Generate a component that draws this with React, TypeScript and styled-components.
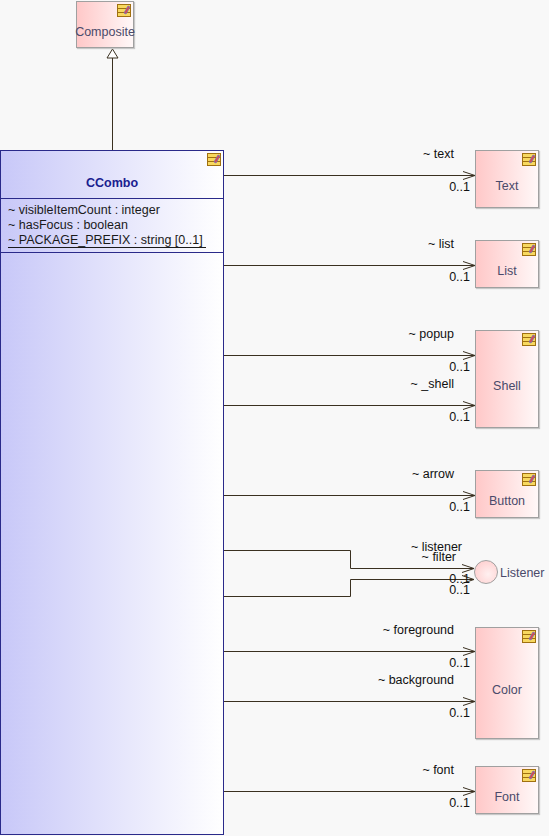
import { FC } from 'react';
import styled, { createGlobalStyle } from 'styled-components';

const Global = createGlobalStyle`
  html, body { margin: 0; padding: 0; background: #f8f8f8; }
  body { font-family: "Liberation Sans", Arial, sans-serif; }
`;

const Canvas = styled.div`
  position: relative;
  width: 549px;
  height: 836px;
  overflow: hidden;
  background: #f8f8f8;
`;

const Wires = styled.svg`
  position: absolute;
  left: 0;
  top: 0;
`;

const ClassBox = styled.div<{ $x: number; $y: number; $w: number; $h: number }>`
  position: absolute;
  left: ${(p) => p.$x}px;
  top: ${(p) => p.$y}px;
  width: ${(p) => p.$w}px;
  height: ${(p) => p.$h}px;
  box-sizing: border-box;
  padding-top: 14px;
  border: 1px solid #a0a0a0;
  background: linear-gradient(to right, #ffc8c8, #fff8f8);
  display: flex;
  align-items: center;
  justify-content: center;
  font-size: 12.5px;
  color: #4a4a6a;
  box-shadow: 1px 1px 1px #c8c8c8;
`;

const MainBox = styled.div`
  position: absolute;
  left: 0;
  top: 150px;
  width: 224px;
  height: 685px;
  box-sizing: border-box;
  border: 1px solid #2a2a8a;
  background: linear-gradient(to right, #c8c8f8, #ffffff);
  display: flex;
  flex-direction: column;
`;

const MainHeader = styled.div`
  height: 48px;
  border-bottom: 1px solid #2a2a8a;
  display: flex;
  align-items: center;
  justify-content: center;
  padding-top: 16px;
  box-sizing: border-box;
  font-size: 12.5px;
  font-weight: bold;
  color: #1a2090;
`;

const Attrs = styled.div`
  border-bottom: 1px solid #2a2a8a;
  padding: 4px 0 4px 7px;
  font-size: 12.5px;
  line-height: 15px;
  color: #1a1a1a;
`;

const Underlined = styled.span`
  display: inline-block;
  border-bottom: 1px solid #1a1a1a;
  line-height: 13px;
  padding-right: 3px;
`;

const Badge = styled.svg`
  position: absolute;
  right: 2px;
  top: 2px;
`;

const Label = styled.div<{ $x: number; $y: number }>`
  position: absolute;
  right: ${(p) => 549 - p.$x}px;
  top: ${(p) => p.$y}px;
  font-size: 12.5px;
  line-height: 14px;
  color: #111;
  white-space: nowrap;
`;

const Circle = styled.div`
  position: absolute;
  left: 474px;
  top: 560px;
  width: 24px;
  height: 24px;
  box-sizing: border-box;
  border-radius: 50%;
  border: 1px solid #a0a0a0;
  background: radial-gradient(circle at 60% 60%, #fff0f0, #ffc8c8);
`;

const CircleText = styled.div`
  position: absolute;
  left: 500px;
  top: 566px;
  font-size: 12.5px;
  color: #4a4a6a;
`;

const Icon: FC = () => (
  <Badge width="14" height="13" viewBox="0 0 14 13">
    <rect x="0.5" y="0.5" width="13" height="12" fill="#f8d860" stroke="#a07010" />
    <line x1="1" y1="4.5" x2="13" y2="4.5" stroke="#a07010" />
    <line x1="1" y1="8.5" x2="13" y2="8.5" stroke="#a07010" />
    <path d="M7 9 L11 2 L13 3 L9 10 Z" fill="#e04848" stroke="#7070c0" strokeWidth="0.8" />
  </Badge>
);

type Box = { name: string; y: number; h: number };
const boxes: Box[] = [
  { name: 'Text', y: 150, h: 58 },
  { name: 'List', y: 240, h: 48 },
  { name: 'Shell', y: 330, h: 98 },
  { name: 'Button', y: 470, h: 48 },
  { name: 'Color', y: 627, h: 112 },
  { name: 'Font', y: 766, h: 48 },
];

type Ref = { role: string; y: number };
const refs: Ref[] = [
  { role: '~ text', y: 175 },
  { role: '~ list', y: 265 },
  { role: '~ popup', y: 355 },
  { role: '~ _shell', y: 405 },
  { role: '~ arrow', y: 495 },
  { role: '~ foreground', y: 651 },
  { role: '~ background', y: 701 },
  { role: '~ font', y: 791 },
];

const Arrow: FC<{ d: string; x: number; y: number }> = ({ d, x, y }) => (
  <g stroke="#3a3020" fill="none" strokeWidth="1">
    <path d={d} />
    <path d={`M${x - 12} ${y - 4} L${x} ${y} L${x - 12} ${y + 4}`} />
  </g>
);

const App: FC = () => (
  <Canvas>
    <Global />
    <Wires width="549" height="836">
      <line x1="112.5" y1="58" x2="112.5" y2="150" stroke="#3a3020" />
      <path d="M112.5 49 L107 58 L118 58 Z" fill="#fff" stroke="#3a3020" />
      {refs.map((r) => (
        <Arrow key={r.role} d={`M224 ${r.y + 0.5} H475`} x={475} y={r.y + 0.5} />
      ))}
      <Arrow d="M224 550.5 H350.5 V568.5 H474" x={474} y={568.5} />
      <Arrow d="M224 596.5 H350.5 V579.5 H474" x={474} y={579.5} />
    </Wires>

    <ClassBox $x={76} $y={1} $w={58} $h={47}>
      Composite
      <Icon />
    </ClassBox>

    <MainBox>
      <MainHeader>CCombo</MainHeader>
      <Attrs>
        ~ visibleItemCount : integer
        <br />~ hasFocus : boolean
        <br />
        <Underlined>~ PACKAGE_PREFIX : string [0..1]</Underlined>
      </Attrs>
      <Icon />
    </MainBox>

    {boxes.map((b) => (
      <ClassBox key={b.name} $x={475} $y={b.y} $w={64} $h={b.h}>
        {b.name}
        <Icon />
      </ClassBox>
    ))}

    {refs.map((r) => (
      <div key={r.role}>
        <Label $x={454} $y={r.y - 28}>{r.role}</Label>
        <Label $x={470} $y={r.y + 5}>0..1</Label>
      </div>
    ))}

    <Label $x={462} $y={540}>~ listener</Label>
    <Label $x={456} $y={550}>~ filter</Label>
    <Label $x={470} $y={572}>0..1</Label>
    <Label $x={470} $y={583}>0..1</Label>
    <Circle />
    <CircleText>Listener</CircleText>
  </Canvas>
);

export default App;
